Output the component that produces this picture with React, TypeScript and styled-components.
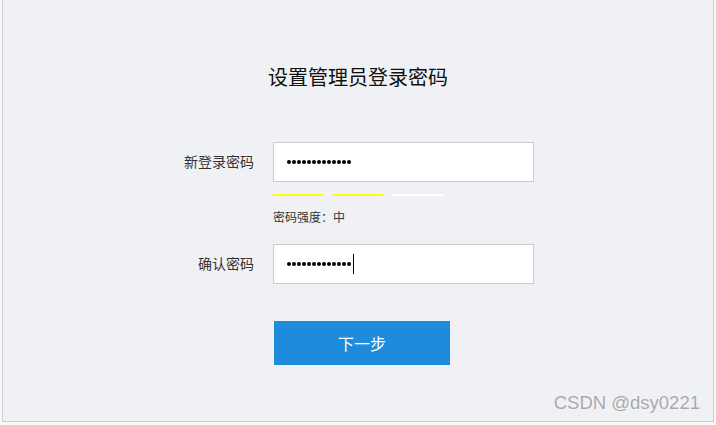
import styled, { createGlobalStyle } from "styled-components";

const GlobalStyle = createGlobalStyle`
  html, body {
    margin: 0;
    padding: 0;
    background: #f8f8f9;
  }
  body {
    font-family: "Noto Sans CJK SC", "Noto Sans", sans-serif;
  }
`;

const Frame = styled.div`
  box-sizing: border-box;
  width: 712px;
  height: 422px;
  margin: 0 2px;
  border: 1px solid #cccccc;
  border-top: none;
  background: #f0f1f5;
  display: flex;
  flex-direction: column;
  align-items: center;
  padding-top: 63px;
`;

const Title = styled.h2`
  margin: 0;
  font-size: 20px;
  line-height: 28px;
  font-weight: normal;
  color: #111;
`;

const Form = styled.div`
  align-self: flex-start;
  margin: 51px 0 0 151px;
  display: flex;
  flex-direction: column;
`;

const Row = styled.div<{ $top?: number }>`
  display: grid;
  grid-template-columns: 100px 261px;
  column-gap: 19px;
  align-items: center;
  margin-top: ${(p) => p.$top ?? 0}px;
`;

const Label = styled.label`
  text-align: right;
  font-size: 14px;
  line-height: 20px;
  padding-bottom: 2px;
  color: #333;
`;

const Field = styled.div`
  box-sizing: border-box;
  height: 40px;
  border: 1px solid #cccccc;
  background: #fff;
  padding-left: 13px;
  display: flex;
  align-items: center;
`;

const Dot = styled.span`
  width: 4px;
  height: 4px;
  border-radius: 50%;
  background: #000;
  margin-right: 1px;
  flex: none;
`;

const Caret = styled.span`
  width: 1px;
  height: 20px;
  margin-left: 1px;
  background: #000;
`;

const Content = styled.div`
  grid-column: 2;
`;

const Bars = styled.div`
  display: flex;
  gap: 10px;
`;

const Bar = styled.span<{ $on: boolean }>`
  width: 50px;
  height: 2px;
  background: ${(p) => (p.$on ? "#ffff00" : "#ffffff")};
`;

const Strength = styled.div`
  font-size: 12px;
  line-height: 16px;
  color: #333;
`;

const NextButton = styled.button`
  display: block;
  width: 176px;
  height: 44px;
  margin-left: 1px;
  border: none;
  background: #1e8bdb;
  color: #fff;
  font-family: inherit;
  font-size: 16px;
  cursor: pointer;
`;

const Watermark = styled.div`
  position: absolute;
  right: 16px;
  top: 392px;
  font-family: "Liberation Sans", Arial, sans-serif;
  font-size: 18.5px;
  line-height: 22px;
  color: #a8a8a8;
  text-shadow: 0 0 1px #fff;
`;

function Password({ length, focused }: { length: number; focused?: boolean }) {
  return (
    <Field>
      {Array.from({ length }, (_, i) => (
        <Dot key={i} />
      ))}
      {focused && <Caret />}
    </Field>
  );
}

export default function App() {
  const strength = 2;
  return (
    <>
      <GlobalStyle />
      <Frame>
        <Title>设置管理员登录密码</Title>
        <Form>
          <Row>
            <Label>新登录密码</Label>
            <Password length={13} />
          </Row>
          <Row $top={12}>
            <Content>
              <Bars>
                {[0, 1, 2].map((i) => (
                  <Bar key={i} $on={i < strength} />
                ))}
              </Bars>
            </Content>
          </Row>
          <Row $top={13}>
            <Content>
              <Strength>密码强度：中</Strength>
            </Content>
          </Row>
          <Row $top={19}>
            <Label>确认密码</Label>
            <Password length={13} focused />
          </Row>
          <Row $top={37}>
            <Content>
              <NextButton>下一步</NextButton>
            </Content>
          </Row>
        </Form>
      </Frame>
      <Watermark>CSDN @dsy0221</Watermark>
    </>
  );
}
